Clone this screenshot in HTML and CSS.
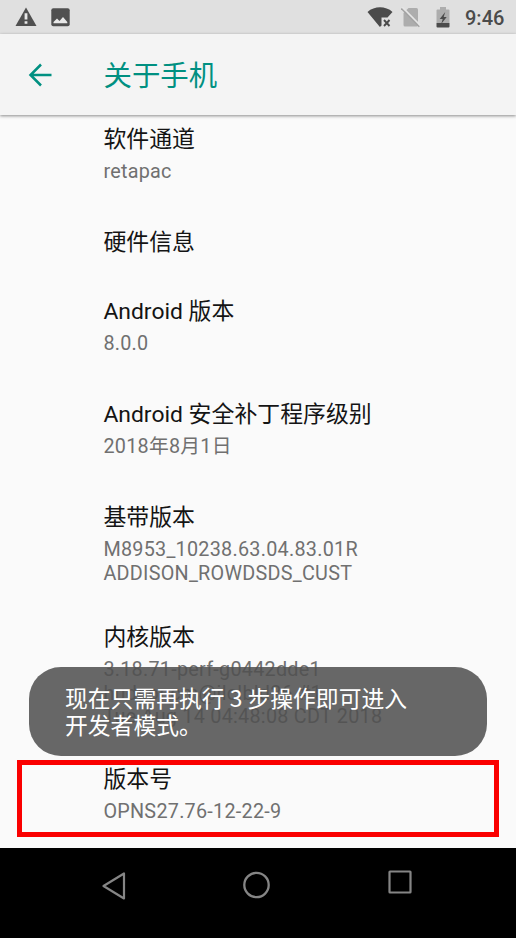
FILE: index.html
```html
<!DOCTYPE html>
<html lang="zh-CN">
<head>
<meta charset="utf-8">
<title>关于手机</title>
<link rel="stylesheet" href="styles.css">
</head>
<body>
<div class="phone">
  <header class="status">
    <svg class="warn" width="22" height="20" viewBox="0 0 22 20"><path d="M11 .5 21.500 19H.5Z" fill="#505050"/><path d="M9.600 6.200h2.800v6.300H9.600zM9.600 14.300h2.800v2.500H9.600z" fill="#e8e8e8"/></svg>
    <svg class="photo" width="19" height="19" viewBox="0 0 19 19"><rect x=".3" y=".2" width="18.400" height="18" rx="2" fill="#505050"/><path d="M2.500 15.200V14L6 10.500 8.500 13 12 9 16.300 14V15.200Z" fill="#e8e8e8"/></svg>
    <span class="spacer"></span>
    <svg class="wifi" width="26" height="22" viewBox="0 0 26 22"><path d="M.5 5C7.500-1.200 18.500-1.200 25.500 5L20.500 10.500H14.500V18.500L12.900 20Z" fill="#4b4b4b"/><path d="m17 13 5.500 6m0-6-5.500 6" stroke="#4b4b4b" stroke-width="1.900"/></svg>
    <svg class="sim" width="20" height="22" viewBox="0 0 20 22"><path d="M7.500 1H15.500Q17 1 17 2.500V18Q17 19.500 15.500 19.500H4Q2.500 19.500 2.500 18V6Z" fill="#adadad"/><path d="m1.200 .2 18 18.200" stroke="#e6e6e6" stroke-width="1.800"/><path d="m.3 1.500 18 18.200" stroke="#a4a4a4" stroke-width="1.400"/></svg>
    <svg class="battery" width="14" height="21" viewBox="0 0 14 21"><path d="M4 0h6v2.500h2.500Q13.500 2.500 13.500 3.500V16H.5V3.500Q.5 2.500 1.500 2.500H4Z" fill="#adadad"/><path d="M.5 16h13v3.500q0 1-1 1H1.500q-1 0-1-1Z" fill="#4b4b4b"/><path d="m9.200 5-5.500 7h3l-1.500 5 5.500-7h-3Z" fill="#4b4b4b"/></svg>
    <span class="clock">9:46</span>
  </header>
  <div class="appbar">
    <svg class="back" width="24" height="24" viewBox="0 0 24 24"><path d="M23.500 12H2.500M13 1.500 2.500 12l10.500 10.500" fill="none" stroke="#009081" stroke-width="2.500"/></svg>
    <h1>关于手机</h1>
  </div>
  <main class="list">
    <section class="item"><h2>软件通道</h2><p>retapac</p></section>
    <section class="item single"><h2>硬件信息</h2></section>
    <section class="item"><h2>Android 版本</h2><p>8.0.0</p></section>
    <section class="item"><h2>Android 安全补丁程序级别</h2><p>2018年8月1日</p></section>
    <section class="item double"><h2>基带版本</h2><p>M8953_10238.63.04.83.01R<br>ADDISON_ROWDSDS_CUST</p></section>
    <section class="item triple"><h2>内核版本</h2><p>3.18.71-perf-g0442dde1<br>hudsoncm@ilclbld26 #1<br>Tue Aug 14 04:48:08 CDT 2018</p></section>
    <section class="item"><h2>版本号</h2><p>OPNS27.76-12-22-9</p></section>
  </main>
  <nav class="nav">
    <svg class="nav-back" width="24" height="28" viewBox="0 0 24 28"><path d="M22 1.500V26.500L1.500 14Z" fill="none" stroke="#858585" stroke-width="2.200" stroke-linejoin="round"/></svg>
    <svg class="nav-home" width="28" height="28" viewBox="0 0 28 28"><circle cx="14.500" cy="14" r="12.200" fill="none" stroke="#858585" stroke-width="2.300"/></svg>
    <svg class="nav-recent" width="24" height="24" viewBox="0 0 24 24"><rect x="1.500" y="1.500" width="21" height="21" rx=".5" fill="none" stroke="#858585" stroke-width="2.200"/></svg>
  </nav>
  <div class="highlight"></div>
  <div class="toast">现在只需再执行 3 步操作即可进入<br>开发者模式。</div>
</div>
</body>
</html>
```
FILE: styles.css
```css
* { box-sizing: border-box; }
body { margin: 0; background: #fafafa; font-family: Roboto, "Noto Sans CJK SC", sans-serif; }
h1, h2, p { margin: 0; font-weight: 400; white-space: nowrap; }
svg { display: block; flex: none; }
.phone { position: relative; width: 516px; height: 938px; overflow: hidden; display: flex; flex-direction: column; }
.status { height: 34px; flex: none; display: flex; align-items: flex-start; background: #e0e0e0; padding: 7px 11px 0 15px; }
.photo { margin: 1px 0 0 14px; }
.spacer { flex: 1; }
.sim { margin-left: 8px; }
.battery { margin-left: 15px; }
.clock { margin-left: 15px; width: 40px; font-size: 20px; line-height: 22px; font-weight: 500; color: #4b4b4b; white-space: nowrap; }
.appbar { height: 81px; flex: none; display: flex; align-items: center; padding-left: 28px; background: #f4f4f4; box-shadow: 0 1px 3px rgba(0,0,0,.45); position: relative; }
.appbar h1 { margin-left: 51.500px; padding-top: 4px; font-size: 28.400px; line-height: 40px; color: #009081; }
.list { flex: 1; min-height: 0; overflow: hidden; padding: 7.500px 0 0 103.400px; }
.item { height: 103px; }
.single { height: 69px; }
.double { height: 120px; }
.triple { height: 142px; }
.item h2 { font-size: 22.900px; line-height: 34px; color: #141414; }
.item p { font-size: 19.800px; line-height: 23.500px; letter-spacing: .26px; padding-top: 3.500px; color: #707070; }
.nav { height: 90px; flex: none; display: flex; align-items: flex-start; background: #000; padding: 22px 0 0 101px; }
.nav-back { margin: 2px 0 0 1px; }
.nav-home { margin: 1px 0 0 116px; }
.nav-recent { margin-left: 118px; }
.highlight { position: absolute; left: 17px; top: 760px; width: 482px; height: 77px; border: 5px solid #fa0000; }
.toast { position: absolute; left: 29px; top: 667px; width: 458px; height: 89px; border-radius: 32px; background: rgba(80,80,80,.87); color: #fff; padding: 17px 0 0 36px; font-family: "Noto Sans CJK SC", sans-serif; font-size: 22.800px; line-height: 27px; white-space: nowrap; }
```
